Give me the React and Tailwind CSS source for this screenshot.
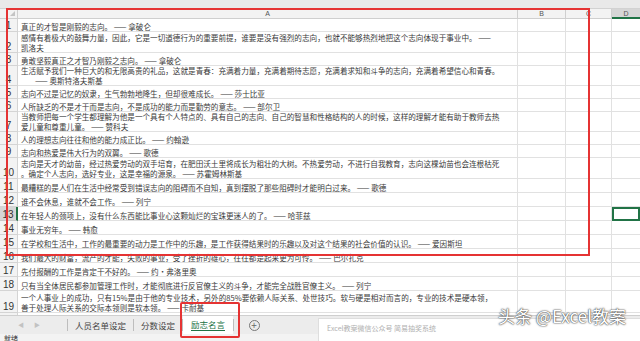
const rows = [
  { n: 1, h: "h-[13px]", lines: ["真正的才智是刚毅的志向。 —— 拿破仑"] },
  {
    n: 2,
    h: "h-[21px]",
    lines: [
      "感情有着极大的鼓舞力量，因此，它是一切道德行为的重要前提，谁要是没有强烈的志向，也就不能够热烈地把这个志向体现于事业中。 ——",
      "凯洛夫",
    ],
  },
  { n: 3, h: "h-[13px]", lines: ["勇敢坚毅真正之才智乃刚毅之志向。 —— 拿破仑"] },
  {
    n: 4,
    h: "h-[20px]",
    lines: [
      "生活赋予我们一种巨大的和无限高贵的礼品，这就是青春：充满着力量，充满着期待志愿，充满着求知和斗争的志向，充满着希望信心和青春。",
      "—— 奥斯特洛夫斯基",
    ],
    indent: true,
  },
  { n: 5, h: "h-[13px]", lines: ["志向不过是记忆的奴隶，生气勃勃地降生，但却很难成长。 —— 莎士比亚"] },
  { n: 6, h: "h-[13px]", lines: ["人所缺乏的不是才干而是志向，不是成功的能力而是勤劳的意志。 —— 部尔卫"] },
  {
    n: 7,
    h: "h-[20px]",
    lines: [
      "当教师把每一个学生都理解为他是一个具有个人特点的、具有自己的志向、自己的智慧和性格结构的人的时候，这样的理解才能有助于教师去热",
      "爱儿童和尊重儿童。 —— 赞科夫",
    ],
  },
  { n: 8, h: "h-[13px]", lines: ["人的理想志向往往和他的能力成正比。 —— 约翰逊"] },
  { n: 9, h: "h-[13px]", lines: ["志向和热爱是伟大行为的双翼。 —— 歌德"] },
  {
    n: 10,
    h: "h-[21px]",
    lines: [
      "志向是天才的幼苗，经过热爱劳动的双手培育，在肥田沃土里将成长为粗壮的大树。不热爱劳动，不进行自我教育，志向这棵幼苗也会连根枯死",
      "。确定个人志向，选好专业，这是幸福的源泉。 —— 苏霍姆林斯基",
    ],
  },
  { n: 11, h: "h-[14px]", lines: ["最糟糕的是人们在生活中经常受到错误志向的阻碍而不自知，真到摆脱了那些阻碍时才能明白过来。 —— 歌德"] },
  { n: 12, h: "h-[14px]", lines: ["谁不会休息，谁就不会工作。 —— 列宁"] },
  { n: 13, h: "h-[14px]", lines: ["在年轻人的颈项上，没有什么东西能比事业心这颗灿烂的宝珠更迷人的了。 —— 哈菲兹"], active: true },
  { n: 14, h: "h-[14px]", lines: ["事业无穷年。 —— 韩愈"] },
  { n: 15, h: "h-[14px]", lines: ["在学校和生活中，工作的最重要的动力是工作中的乐趣，是工作获得结果时的乐趣以及对这个结果的社会价值的认识。 —— 爱因斯坦"] },
  { n: 16, h: "h-[14px]", lines: ["我们最大的财富，流产的才能，失败的事业，受了挫折的雄心，往往都是起来更为可怜。 —— 巴尔扎克"] },
  { n: 17, h: "h-[14px]", lines: ["先付报酬的工作是肯定干不好的。 —— 约·弗洛里奥"] },
  { n: 18, h: "h-[14px]", lines: ["只有当全体居民都参加管理工作时，才能彻底进行反官僚主义的斗争，才能完全战胜官僚主义。 —— 列宁"] },
  {
    n: 19,
    h: "h-[22px]",
    lines: [
      "一个人事业上的成功，只有15%是由于他的专业技术，另外的85%要依赖人际关系、处世技巧。软与硬是相对而言的，专业的技术是硬本领，",
      "善于处理人际关系的交际本领则是软本领。 —— 卡耐基",
    ],
  },
];

function Row({ row }) {
  return (
    <div className={`flex shrink-0 ${row.h}`}>
      <div
        className={`w-[18px] shrink-0 flex items-end justify-center border-b border-r font-['Liberation_Sans',sans-serif] text-[10px] leading-[11px] text-[#333] ${
          row.active
            ? "bg-[#d6d6d6] border-r-2 border-r-[#217346] border-b-[#c8c8c8]"
            : "bg-[#f3f3f3] border-[#d4d4d4]"
        }`}
      >
        {row.n}
      </div>
      <div className="w-[500px] shrink-0 flex flex-col justify-end border-b border-r border-[#e1e1e1] px-[3px] overflow-hidden text-[7.6px] leading-[9.5px] text-[#3a3a3a]">
        {row.lines.map((line, i) => (
          <div key={i} className={`whitespace-nowrap ${row.indent && i > 0 ? "pl-[14px]" : ""}`}>
            {line}
          </div>
        ))}
      </div>
      <div className="w-[48px] shrink-0 border-b border-r border-[#e1e1e1]" />
      <div className="w-[46px] shrink-0 border-b border-r border-[#e1e1e1]" />
      <div
        className={`flex-1 ${
          row.active ? "border-2 border-[#217346]" : "border-b border-[#e1e1e1]"
        }`}
      />
    </div>
  );
}

export default function App() {
  return (
    <div className="relative w-[640px] h-[341px] overflow-hidden bg-white font-['Noto_Sans_CJK_SC','Noto_Sans',sans-serif]">
      <div className="h-[315px] flex flex-col overflow-hidden">
        <div className="h-[9px] shrink-0 bg-[#e9e9e9] border-b border-[#d2d2d2]" />
        <div className="flex h-[10px] shrink-0 bg-[#f3f3f3] text-[7px] leading-[9px] text-[#555] font-['Liberation_Sans',sans-serif]">
          <div className="w-[18px] shrink-0 relative border-r border-b border-[#cfcfcf]">
            <div className="absolute right-[2px] bottom-[2px] w-0 h-0 border-l-[5px] border-l-transparent border-b-[5px] border-b-[#c4c4c4]" />
          </div>
          <div className="w-[500px] shrink-0 text-center border-r border-b border-[#cfcfcf]">A</div>
          <div className="w-[48px] shrink-0 text-center border-r border-b border-[#cfcfcf]">B</div>
          <div className="w-[46px] shrink-0 text-center border-r border-b border-[#cfcfcf]">C</div>
          <div className="flex-1 text-center bg-[#d6d6d6] border-b-2 border-[#217346]">D</div>
        </div>
        {rows.map(row => (
          <Row key={row.n} row={row} />
        ))}
        <div className="flex flex-1 min-h-0">
          <div className="w-[18px] shrink-0 bg-[#f3f3f3] border-r border-[#d4d4d4]" />
          <div className="w-[500px] shrink-0 border-r border-[#e1e1e1]" />
          <div className="w-[48px] shrink-0 border-r border-[#e1e1e1]" />
          <div className="w-[46px] shrink-0 border-r border-[#e1e1e1]" />
        </div>
      </div>

      <div className="h-[19px] flex items-stretch bg-[#ececec] border-t border-[#cfcfcf] text-[8.5px] leading-[11px] text-[#444]">
        <div className="w-[67px] flex items-center gap-[10px] pl-[18px] text-[6px] leading-[8px] text-[#c2c2c2]">
          <span>◀</span>
          <span>▶</span>
        </div>
        <div className="w-px my-[3px] bg-[#bdbdbd]" />
        <div className="w-[65px] flex items-center justify-center">人员名单设定</div>
        <div className="w-px my-[3px] bg-[#bdbdbd]" />
        <div className="w-[48px] flex items-center justify-center">分数设定</div>
        <div className="w-px my-[3px] bg-[#bdbdbd]" />
        <div className="w-[50px] flex flex-col items-center justify-center bg-white text-[#217346]">
          <span className="border-b border-[#217346]">励志名言</span>
        </div>
        <div className="w-px my-[3px] bg-[#bdbdbd]" />
        <div className="w-[40px] flex items-center justify-center">
          <div className="w-[11px] h-[11px] rounded-full border border-[#777] flex items-center justify-center text-[10px] leading-none text-[#666]">
            +
          </div>
        </div>
      </div>
      <div className="h-[7px] bg-[#f3f3f3] pl-[4px] text-[7px] leading-[8px] text-[#333]">就绪</div>

      <div className="absolute left-[6px] top-[8px] w-[584px] h-[248px] border-2 border-[#e53333]" />
      <div className="absolute left-[180px] top-[302px] w-[60px] h-[36px] border-2 border-[#e53333] rounded-[2px]" />

      <div className="absolute left-[318px] top-[318px] w-[330px] h-[30px] bg-white border border-[#dedede] pl-[8px] pt-[4px] text-[7px] text-[#b0b0b0]">
        Excel教案微信公众号 简易抽奖系统
      </div>
      <div className="absolute left-[498px] top-[305px] text-[17px] leading-[22px] text-white [text-shadow:0_0_2px_#333,0_0_1px_#333]">
        头条 @Excel教案
      </div>
    </div>
  );
}
